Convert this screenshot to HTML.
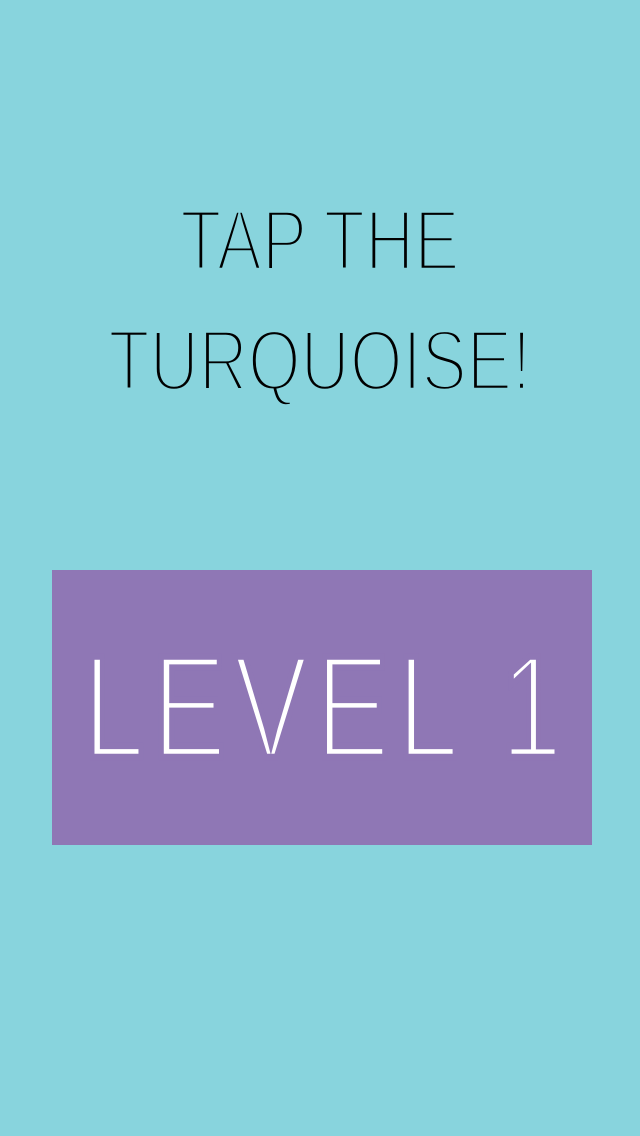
<!DOCTYPE html>
<html><head><style>
html,body{margin:0;padding:0}
body{width:640px;height:1136px;background:#88D4DD;position:relative;overflow:hidden;font-family:"Liberation Sans",sans-serif}
.t{position:absolute;left:0;width:640px;text-align:center;line-height:1;white-space:nowrap}
.t span{display:inline-block;transform-origin:center}
.a{font-size:86px;color:#000}
.a span{transform:scaleX(0.79);-webkit-text-stroke:4.5px #88D4DD}
.box{position:absolute;left:52px;top:570px;width:540px;height:275px;background:#8F77B5}
.l{font-size:146px;color:#fff}
.l span{transform:scaleX(0.76);-webkit-text-stroke:6.5px #8F77B5;letter-spacing:10px}
</style></head><body>
<div class="t a" style="top:198px"><span>TAP THE</span></div>
<div class="t a" style="top:318px"><span>TURQUOISE!</span></div>
<div class="box"></div>
<div class="t l" style="top:634px;left:6px"><span>LEVEL 1</span></div>
</body></html>
